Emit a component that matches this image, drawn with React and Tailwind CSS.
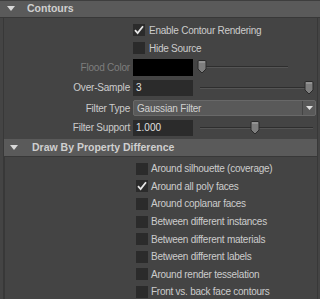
import React from "react";

const font = { fontFamily: '"Liberation Sans", Arial, sans-serif' };

function Check({ checked }) {
  return (
    <div className="w-[12px] h-[12px] bg-[#2b2b2b] flex items-center justify-center shrink-0">
      {checked && (
        <svg width="12" height="12" viewBox="0 0 12 12">
          <path d="M2 6.2 L4.6 9 L10 2.2" fill="none" stroke="#e6e6e6" strokeWidth="1.8" />
        </svg>
      )}
    </div>
  );
}

function Thumb() {
  return (
    <svg width="10" height="14" viewBox="0 0 10 14" className="shrink-0">
      <path d="M1 1.5 Q1 0.5 2 0.5 H8 Q9 0.5 9 1.5 V9 L5 13 L1 9 Z" fill="#7e7e7e" stroke="#2a2a2a" strokeWidth="1" />
      <path d="M2 2 H8" stroke="#a8a8a8" strokeWidth="1" />
    </svg>
  );
}

function Slider({ pos, trackEnd }) {
  return (
    <div className="relative h-[16px]" style={{ width: trackEnd }}>
      <div className="absolute left-[4px] right-0 top-[7px] h-[2px] bg-[#2e2e2e] border-b border-[#555]" />
      <div className="absolute top-[1px]" style={{ left: pos }}>
        <Thumb />
      </div>
    </div>
  );
}

function Header({ label, inset }) {
  return (
    <div
      className={
        "h-[18px] flex items-center bg-[#5a5a5a] border-b border-[#383838] shrink-0 " +
        (inset ? "pl-[6px]" : "pl-[7px] border-t border-t-[#3e3e3e]")
      }
    >
      <svg width="8" height="6" viewBox="0 0 8 6" className="shrink-0">
        <path d="M0 0 H8 L4 5 Z" fill="#d8d8d8" />
      </svg>
      <span className={"font-bold text-[10.5px] text-[#cfcfcf] " + (inset ? "ml-[14px]" : "ml-[12px]")}>
        {label}
      </span>
    </div>
  );
}

function LabelRow({ label, dim, children, h }) {
  return (
    <div className="flex items-center shrink-0" style={{ height: h }}>
      <div
        className={
          "w-[129px] shrink-0 text-right pr-[3px] text-[10px] tracking-[-0.2px] " +
          (dim ? "text-[#7e7e7e]" : "text-[#cccccc]")
        }
      >
        {label}
      </div>
      {children}
    </div>
  );
}

function CheckRow({ label, checked, h }) {
  return (
    <div className="flex items-center shrink-0" style={{ height: h }}>
      <div className="w-[129px] shrink-0" />
      <Check checked={checked} />
      <span className="ml-[4px] text-[10px] tracking-[-0.25px] text-[#cccccc]">{label}</span>
    </div>
  );
}

export default function App() {
  const rows2 = [
    ["Around silhouette (coverage)", false],
    ["Around all poly faces", true],
    ["Around coplanar faces", false],
    ["Between different instances", false],
    ["Between different materials", false],
    ["Between different labels", false],
    ["Around render tesselation", false],
    ["Front vs. back face contours", false],
  ];
  return (
    <div className="w-[320px] h-[299px] bg-[#444444] overflow-hidden flex flex-col" style={font}>
      <Header label="Contours" />
      <div className="ml-[3px] mr-[2px] flex-1 flex flex-col border-l border-r border-[#383838] pt-[3px]">
        <CheckRow label="Enable Contour Rendering" checked h={18} />
        <CheckRow label="Hide Source" h={18} />
        <LabelRow label="Flood Color" dim h={20}>
          <div className="w-[60px] h-[17px] bg-black shrink-0" />
          <div className="ml-[3px]">
            <Slider pos={1} trackEnd={92} />
          </div>
        </LabelRow>
        <LabelRow label="Over-Sample" h={21}>
          <div className="w-[60px] h-[16px] bg-[#2b2b2b] shrink-0 text-[10px] text-[#e0e0e0] pl-[3px] leading-[16px]">3</div>
          <div className="ml-[3px]">
            <Slider pos={108} trackEnd={112} />
          </div>
        </LabelRow>
        <LabelRow label="Filter Type" h={20}>
          <div className="w-[183px] h-[16px] bg-[#595959] border border-[#686868] rounded-[2px] shrink-0 flex items-center text-[10px] text-[#d0d0d0]">
            <span className="flex-1 pl-[3px] tracking-[-0.2px]">Gaussian Filter</span>
            <div className="w-[13px] h-full border-l border-[#444] flex items-center justify-center">
              <svg width="7" height="4" viewBox="0 0 7 4">
                <path d="M0 0 H7 L3.5 4 Z" fill="#e0e0e0" />
              </svg>
            </div>
          </div>
        </LabelRow>
        <LabelRow label="Filter Support" h={19}>
          <div className="w-[60px] h-[16px] bg-[#2b2b2b] shrink-0 text-[10px] text-[#e0e0e0] pl-[3px] leading-[16px]">1.000</div>
          <div className="ml-[3px]">
            <Slider pos={54} trackEnd={117} />
          </div>
        </LabelRow>
        <div className="h-[2px] shrink-0" />
        <Header label="Draw By Property Difference" inset />
        <div className="flex flex-col pt-[3px] border-l border-[#383838]">
          {rows2.map(([l, c]) => (
            <div key={l} className="flex items-center shrink-0 h-[17.6px]">
              <div className="w-[131px] shrink-0" />
              <Check checked={c} />
              <span className="ml-[3px] text-[10px] tracking-[-0.25px] text-[#cccccc]">{l}</span>
            </div>
          ))}
        </div>
      </div>
    </div>
  );
}
